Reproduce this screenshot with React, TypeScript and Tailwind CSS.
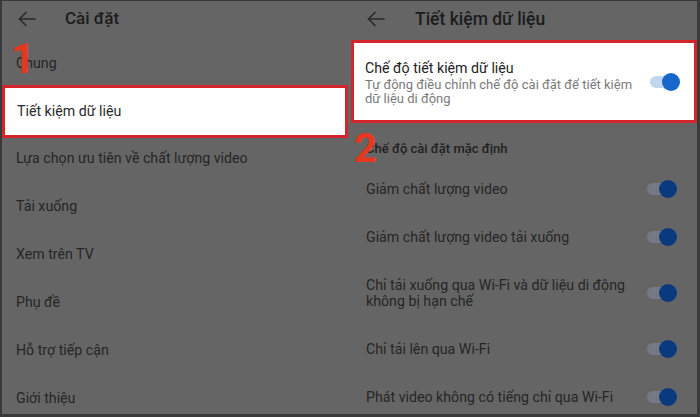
import React from "react";

const font = { fontFamily: "Roboto, 'Noto Sans', 'Liberation Sans', sans-serif" };

function Arrow() {
  return (
    <svg width="18" height="16" viewBox="0 0 18 16" fill="none" stroke="#2a2a2a" strokeWidth="1.7" strokeLinecap="round" strokeLinejoin="round">
      <path d="M17 8H1.5" />
      <path d="M8 1.5L1.5 8L8 14.5" />
    </svg>
  );
}

function Toggle({ dim = true }: { dim?: boolean }) {
  return (
    <div className="relative w-[30px] h-[18px] flex items-center shrink-0">
      <div className={`absolute left-0 w-[26px] h-[12px] rounded-full ${dim ? "bg-[#747a83]" : "bg-[#c3d6ef]"}`} />
      <div className={`absolute right-0 w-[18px] h-[18px] rounded-full ${dim ? "bg-[#0a3a7e]" : "bg-[#1766c9]"}`} />
    </div>
  );
}

function LeftRow({ text }: { text: string }) {
  return (
    <div className="h-[48px] shrink-0 flex items-center pl-[14px] text-[14.2px] text-[#262626]">{text}</div>
  );
}

function RightRow({ lines, h = "h-[48px]" }: { lines: string[]; h?: string }) {
  return (
    <div className={`${h} shrink-0 flex items-center justify-between pl-[15px] pr-[20px]`}>
      <div className="text-[14.2px] leading-[16px] text-[#262626]">
        {lines.map((l) => (
          <div key={l}>{l}</div>
        ))}
      </div>
      <Toggle />
    </div>
  );
}

export default function App() {
  return (
    <div style={font} className="relative w-[700px] h-[417px] overflow-hidden bg-[#656565] border-t border-l-2 border-r-[3px] border-b-[3px] border-[#3a3a3a] flex">
      {/* Left panel */}
      <div className="w-[346px] shrink-0 flex flex-col">
        <div className="h-[39px] shrink-0 flex items-center pb-[3px]">
          <div className="pl-[16px] w-[63px]"><Arrow /></div>
          <div className="text-[17px] font-medium text-[#1c1c1c]">Cài đặt</div>
        </div>
        <LeftRow text="Chung" />
        <div className="h-[53px] shrink-0 -mt-[3px] -mb-[3px] bg-white border-[3px] border-[#d3262c] flex items-center pl-[12px] text-[14.2px] text-[#2a2a2a]">
          Tiết kiệm dữ liệu
        </div>
        <LeftRow text="Lựa chọn ưu tiên về chất lượng video" />
        <LeftRow text="Tải xuống" />
        <LeftRow text="Xem trên TV" />
        <LeftRow text="Phụ đề" />
        <LeftRow text="Hỗ trợ tiếp cận" />
        <LeftRow text="Giới thiệu" />
      </div>

      {/* Right panel */}
      <div className="flex-1 flex flex-col pl-[3px]">
        <div className="h-[39px] shrink-0 flex items-center pb-[3px]">
          <div className="pl-[16px] w-[64px]"><Arrow /></div>
          <div className="text-[17.5px] font-medium text-[#1c1c1c]">Tiết kiệm dữ liệu</div>
        </div>
        <div className="h-[83px] shrink-0 bg-white border-[3px] border-[#d3262c] flex items-center justify-between pl-[11px] pr-[14px]">
          <div>
            <div className="text-[14.2px] leading-[20px] text-[#222]">Chế độ tiết kiệm dữ liệu</div>
            <div className="text-[13px] leading-[14px] text-[#7a7a7a]">
              <div>Tự động điều chỉnh chế độ cài đặt để tiết kiệm</div>
              <div>dữ liệu di động</div>
            </div>
          </div>
          <Toggle dim={false} />
        </div>
        <div className="h-[42px] shrink-0 flex items-center pt-[10px] pl-[15px] text-[13px] font-medium text-[#222]">
          Chế độ cài đặt mặc định
        </div>
        <RightRow lines={["Giảm chất lượng video"]} />
        <RightRow lines={["Giảm chất lượng video tải xuống"]} />
        <RightRow lines={["Chỉ tải xuống qua Wi-Fi và dữ liệu di động", "không bị hạn chế"]} h="h-[64px]" />
        <RightRow lines={["Chỉ tải lên qua Wi-Fi"]} />
        <RightRow lines={["Phát video không có tiếng chỉ qua Wi-Fi"]} />
      </div>

      {/* annotations */}
      <div className="absolute left-[9px] top-[37px] text-[42px] font-bold leading-none text-[#e5381f]">1</div>
      <div className="absolute left-[352px] top-[128px] text-[40px] font-bold leading-none text-[#e5381f]">2</div>
    </div>
  );
}
